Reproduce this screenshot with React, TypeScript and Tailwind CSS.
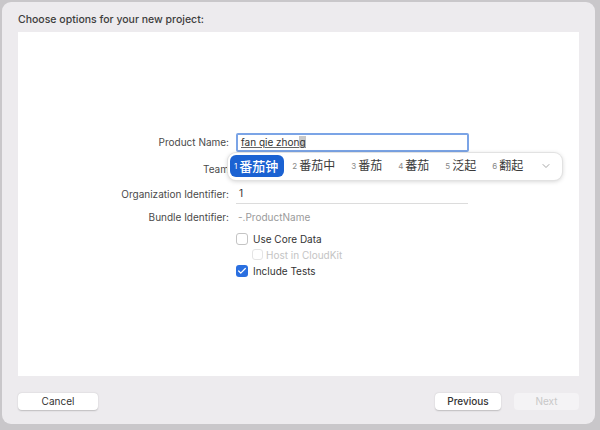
import { Check, ChevronDown } from "lucide-react";

const font = { fontFamily: '"Inter", "Noto Sans CJK SC", sans-serif' };

const candidates = ["番茄中", "番茄", "蕃茄", "泛起", "翻起"];

function Row({ label, children }: { label: string; children: React.ReactNode }) {
  return (
    <div className="flex items-center">
      <div className="w-[218px] shrink-0 pr-[7px] text-right text-[10px] text-[#4a4a4a]">{label}</div>
      <div className="flex-1">{children}</div>
    </div>
  );
}

export default function App() {
  return (
    <div className="h-[430px] w-[600px] bg-[#c9c7ca] pl-[2px] pt-[2px]" style={font}>
      <div className="flex h-[422px] w-[593px] flex-col rounded-[9px] bg-[#edebee]">
        <div className="px-4 pt-[10px] pb-[4px] text-[10.5px] font-medium text-[#3d3d3d]">Choose options for your new project:</div>
        <div className="mx-4 h-[344px] bg-white pt-[101px]">
          <div className="relative">
            <Row label="Product Name:">
              <div className="h-[19px] w-[233px] rounded-[2px] border-2 border-[#7ba4e6] bg-white px-[3px] text-[10px] leading-[15px] text-[#333]">
                <span className="underline decoration-[#666]">fan qie zhon</span>
                <span className="bg-[#c8c8c8] underline decoration-[#666]">g</span>
              </div>
            </Row>
            <div className="mt-[10px]">
              <Row label="Team">
                <div className="h-[14px]" />
              </Row>
            </div>
            <div className="absolute left-[210px] top-[20px] flex h-[27px] w-[334px] items-center rounded-[8px] bg-white pl-[2px] pr-[10px] shadow-[0_1px_5px_rgba(0,0,0,0.22)] ring-1 ring-[#e2e2e2]">
              <div className="flex h-[22px] items-center rounded-[6px] bg-[#1b62d2] pl-[4px] pr-[6px] text-white">
                <span className="mr-[2px] text-[8px]">1</span>
                <span className="text-[13px] font-medium">番茄钟</span>
              </div>
              {candidates.map((c, i) => (
                <div key={c} className={`${i === 0 ? "ml-[8px]" : "ml-[16px]"} flex items-center text-[#3a3a3a]`}>
                  <span className="mr-[2px] text-[8px] text-[#888]">{i + 2}</span>
                  <span className="text-[12px]">{c}</span>
                </div>
              ))}
              <ChevronDown className="ml-auto h-3 w-3 text-[#888]" strokeWidth={1.5} />
            </div>
          </div>
          <div className="mt-[9px]">
            <Row label="Organization Identifier:">
              <div className="w-[232px] border-b border-[#dcdcdc] pb-[2px] pl-[3px] text-[10px] text-[#333]">1</div>
            </Row>
          </div>
          <div className="mt-[6px]">
            <Row label="Bundle Identifier:">
              <div className="pl-[2px] text-[10px] text-[#9a9a9a]">-.ProductName</div>
            </Row>
          </div>
          <div className="ml-[218px] mt-[8px] flex flex-col gap-[4px] text-[10px] leading-[12px]">
            <label className="flex h-[12px] items-center gap-[5px] text-[#333]">
              <span className="h-[12px] w-[12px] rounded-[3px] border border-[#c4c4c4] bg-white" />
              Use Core Data
            </label>
            <label className="ml-[16px] flex h-[12px] items-center gap-[3px] text-[#c4c4c4]">
              <span className="h-[11px] w-[11px] rounded-[3px] border border-[#e4e4e4] bg-white" />
              Host in CloudKit
            </label>
            <label className="flex h-[12px] items-center gap-[5px] text-[#333]">
              <span className="flex h-[12px] w-[12px] items-center justify-center rounded-[3px] bg-[#2a6fe0]">
                <Check className="h-[10px] w-[10px] text-white" strokeWidth={3} />
              </span>
              Include Tests
            </label>
          </div>
        </div>
        <div className="flex items-center px-4 pt-[17px]">
          <button className="h-[17px] w-[80px] rounded-[4px] bg-white text-[10px] text-[#333] shadow-[0_0.5px_1.5px_rgba(0,0,0,0.2)]">Cancel</button>
          <button className="ml-auto h-[17px] w-[66px] rounded-[4px] bg-white text-[10px] font-medium text-[#333] shadow-[0_0.5px_1.5px_rgba(0,0,0,0.2)]">Previous</button>
          <button className="ml-[13px] h-[17px] w-[65px] rounded-[4px] bg-[#f4f3f5] text-[10px] text-[#c8c8c8]">Next</button>
        </div>
      </div>
    </div>
  );
}
